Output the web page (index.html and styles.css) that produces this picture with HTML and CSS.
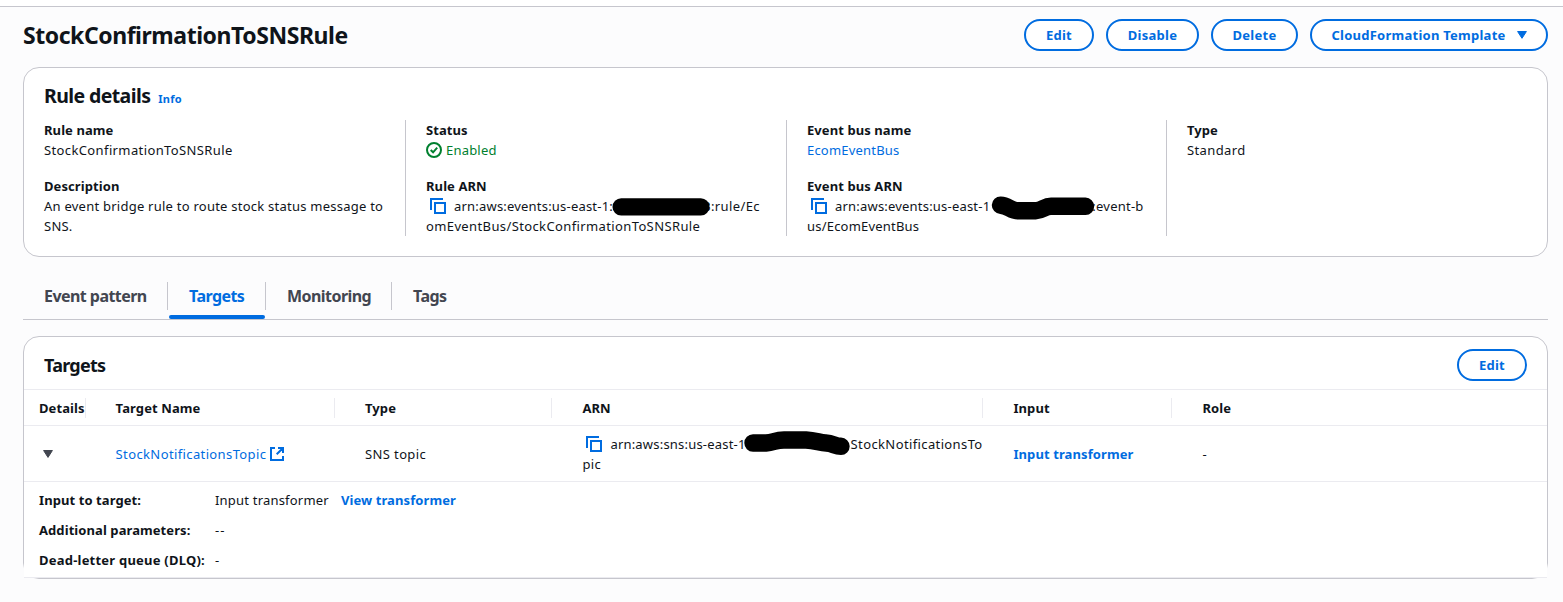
FILE: index.html
```html
<!DOCTYPE html>
<html lang="en">
<head>
<meta charset="utf-8">
<title>StockConfirmationToSNSRule</title>
<link rel="stylesheet" href="styles.css">
</head>
<body>
<div class="topbar"></div>
<main class="page">
  <header class="page-header">
    <h1 class="title">StockConfirmationToSNSRule</h1>
    <div class="actions">
      <button class="btn btn-edit">Edit</button>
      <button class="btn btn-disable">Disable</button>
      <button class="btn btn-delete">Delete</button>
      <button class="btn btn-template">CloudFormation Template
        <svg class="caret" width="10" height="8" viewBox="0 0 10 8"><path d="M0.6 0.5h8.8L5 7.3z" fill="currentColor" stroke="currentColor" stroke-linejoin="round"/></svg>
      </button>
    </div>
  </header>

  <section class="card details-card">
    <div class="details-head"><h2 class="h2">Rule details</h2><a class="info">Info</a></div>
    <div class="columns">
      <div class="column">
        <div class="field"><div class="label">Rule name</div><div class="camel">StockConfirmationToSNSRule</div></div>
        <div class="field"><div class="label">Description</div><div class="desc">An event bridge rule to route stock status message to<br>SNS.</div></div>
      </div>
      <div class="column">
        <div class="field"><div class="label">Status</div>
          <div class="status"><svg width="16" height="16" viewBox="0 0 16 16" fill="none" stroke="currentColor" stroke-width="2"><circle cx="8" cy="8" r="7"/><path d="M4.7 8l2.4 2.3 4.1-4.6"/></svg><span>Enabled</span></div></div>
        <div class="field"><div class="label">Rule ARN</div>
          <div><svg class="copy" width="16" height="16" viewBox="0 0 16 16" fill="none" stroke="currentColor" stroke-width="2"><path d="M1 12V1h12M5 5h10v10H5z"/></svg>arn:aws:events:us-east-1:<span class="mask mask-rule"><span class="under under-rule">3</span><svg width="100" height="20" viewBox="0 0 100 20"><rect x="-0.5" y="2.2" width="97" height="17.4" rx="8.7"/></svg></span><span class="camel">:rule/Ec<br>omEventBus/StockConfirmationToSNSRule</span></div></div>
      </div>
      <div class="column">
        <div class="field"><div class="label">Event bus name</div><div><a class="link">EcomEventBus</a></div></div>
        <div class="field"><div class="label">Event bus ARN</div>
          <div><svg class="copy" width="16" height="16" viewBox="0 0 16 16" fill="none" stroke="currentColor" stroke-width="2"><path d="M1 12V1h12M5 5h10v10H5z"/></svg>arn:aws:events:us-east-1<span class="mask mask-bus"><span class="under under-bus">992</span><svg width="104" height="28" viewBox="0 0 104 28"><path d="M9.5 10.2C17 10.5 20 15.8 27 15.8H44C53 15 53 11.3 60 11.3H94.5" fill="none" stroke="#000" stroke-width="17.4" stroke-linecap="round" stroke-linejoin="round"/></svg></span><span class="desc">:event-b</span><br>us/EcomEventBus</div></div>
      </div>
      <div class="column">
        <div class="field"><div class="label">Type</div><div class="camel">Standard</div></div>
      </div>
    </div>
  </section>

  <nav class="tabs">
    <a class="tab tab-pattern">Event pattern</a>
    <a class="tab tab-targets active">Targets</a>
    <a class="tab tab-monitoring">Monitoring</a>
    <a class="tab tab-tags">Tags</a>
  </nav>

  <section class="card targets-card">
    <div class="targets-head"><h2 class="h2 h2-targets">Targets</h2><button class="btn btn-edit">Edit</button></div>
    <div class="row row-head">
      <div class="cell">Details</div>
      <div class="cell">Target Name</div>
      <div class="cell">Type</div>
      <div class="cell">ARN</div>
      <div class="cell">Input</div>
      <div class="cell">Role</div>
    </div>
    <div class="row row-body">
      <div class="cell"><svg class="expander" width="10" height="8" viewBox="0 0 10 8"><path d="M0.6 0.5h8.8L5 7.4z" fill="currentColor" stroke="currentColor" stroke-linejoin="round"/></svg></div>
      <div class="cell cell-name"><a class="link camel">StockNotificationsTopic</a><svg class="external" width="14" height="14" viewBox="0 0 14 14" fill="none" stroke="currentColor" stroke-width="2"><path d="M5 1H1v12h12V9M8 1h5v5M13 1L6.7 7.3"/></svg></div>
      <div class="cell camel">SNS topic</div>
      <div class="cell cell-arn"><div><svg class="copy" width="16" height="16" viewBox="0 0 16 16" fill="none" stroke="currentColor" stroke-width="2"><path d="M1 12V1h12M5 5h10v10H5z"/></svg>arn:aws:sns:us-east-1<span class="mask mask-sns"><svg width="107" height="26" viewBox="0 0 107 26"><path d="M9 13H22C30 12.5 31 10 40 10H62C72 10.5 76 13 82 13C89 13.2 91 16.3 97 16.3" fill="none" stroke="#000" stroke-width="17.4" stroke-linecap="round" stroke-linejoin="round"/></svg></span><span class="camel">StockNotificationsTo<br>pic</span></div></div>
      <div class="cell"><a class="link strong">Input transformer</a></div>
      <div class="cell">-</div>
    </div>
    <div class="expanded">
      <div class="label">Input to target:</div><div>Input transformer<a class="link strong view">View transformer</a></div>
      <div class="label">Additional parameters:</div><div class="dashes">--</div>
      <div class="label wide">Dead-letter queue (DLQ):</div><div>-</div>
    </div>
  </section>
</main>
</body>
</html>
```
FILE: styles.css
```css
* { box-sizing: border-box; }
body {
  margin: 0;
  height: 602px;
  overflow: hidden;
  background: #fcfcfd;
  color: #0f141a;
  font: 13px/20px "Noto Sans", sans-serif;
  letter-spacing: 0.2px;
  white-space: nowrap;
}
svg { flex: none; }
h1, h2 { margin: 0; }
.topbar { height: 7px; background: #fff; border-bottom: 1px solid #c6c6cd; }
.page { padding: 12px 15px 0 23px; }
.page-header { display: flex; justify-content: space-between; height: 32px; }
.title { font-size: 23px; line-height: 33px; font-weight: 700; letter-spacing: -0.45px; }
.actions { display: flex; gap: 12px; }
.btn {
  display: flex;
  align-items: center;
  justify-content: center;
  height: 32px;
  padding: 0;
  border: 2px solid #006ce0;
  border-radius: 16px;
  background: #fff;
  color: #006ce0;
  font: 700 13px/20px "Noto Sans", sans-serif;
  letter-spacing: 0.25px;
}
.btn-edit { width: 70px; }
.btn-disable { width: 93px; }
.btn-delete { width: 87px; }
.btn-template { width: 238px; gap: 11px; }
.card { border: 1px solid #c6c6cd; border-radius: 16px; background: #fff; }
.details-card { height: 190px; margin-top: 16px; padding: 16px 20px 0; }
.details-head { display: flex; align-items: baseline; gap: 8px; height: 36px; line-height: 24px; }
.h2 { font-size: 19.5px; line-height: 24px; font-weight: 700; letter-spacing: -0.6px; }
.h2-targets { font-size: 18px; letter-spacing: -0.75px; }
.info { color: #006ce0; font-size: 11px; font-weight: 700; }
.columns { display: grid; grid-template-columns: 361px 381px 380px 1fr; height: 116px; }
.column { display: flex; flex-direction: column; gap: 16px; }
.column + .column { padding-left: 20px; border-left: 1px solid #c6c6cd; }
.label { font-weight: 700; letter-spacing: 0.08px; }
.wide { letter-spacing: 0.22px; }
.camel { letter-spacing: 0.38px; }
.desc { letter-spacing: 0.24px; }
.dashes { letter-spacing: 1px; }
.status { display: flex; align-items: center; gap: 4px; color: #00802f; }
.link { color: #006ce0; }
.strong { font-weight: 700; letter-spacing: 0.1px; }
.copy { margin: 0 8px 0 4px; color: #006ce0; vertical-align: -3px; }
.mask { display: inline-block; position: relative; height: 20px; vertical-align: top; }
.mask svg { position: absolute; left: 0; top: 0; overflow: visible; }
.mask-rule { width: 98px; }
.mask-bus { width: 102px; }
.mask-bus svg { top: -1px; left: 1px; }
.mask-sns { width: 105px; }
.mask-sns svg { top: -4px; left: -1.5px; }
.under { position: absolute; top: 0; }
.under-rule { right: 0; }
.under-bus { left: 24px; }
.tabs { display: flex; height: 48px; margin-top: 15px; border-bottom: 1px solid #c6c6cd; }
.tab {
  position: relative;
  height: 28px;
  margin-top: 10px;
  padding-left: 21px;
  border-right: 1px solid #c6c6cd;
  color: #424650;
  font-size: 16px;
  font-weight: 700;
  line-height: 29px;
  letter-spacing: -0.55px;
}
.tab-pattern { width: 145px; }
.tab-targets { width: 98px; }
.tab-monitoring { width: 126px; }
.tab-tags { border-right: 0; }
.active { color: #006ce0; }
.active::after { content: ""; position: absolute; left: 1px; right: 0; top: 33px; height: 4px; border-radius: 2px; background: #006ce0; }
.targets-card { height: 243px; margin-top: 16px; }
.targets-head { display: flex; align-items: center; justify-content: space-between; height: 53px; padding: 4px 20px 0; border-bottom: 1px solid #ebebf0; }
.row { display: grid; grid-template-columns: 62px 249px 217px 431px 189px 1fr; align-items: center; border-bottom: 1px solid #ebebf0; }
.row-head { height: 36px; font-weight: 700; letter-spacing: 0.1px; }
.row-body { height: 56px; }
.cell { padding-left: 30.4px; }
.cell:nth-child(2) { padding-left: 29.6px; }
.cell:nth-child(3) { padding-left: 30px; }
.cell:first-child { padding-left: 15px; }
.row-head .cell:not(:last-child) { border-right: 1px solid #ebebf0; }
.expander { display: block; margin-left: 4px; color: #424650; }
.external { margin-left: 4px; color: #006ce0; vertical-align: -2px; }
.expanded { display: grid; grid-template-columns: 176px 1fr; row-gap: 10px; height: 96px; padding: 8px 15px; background: #fff; border-bottom: 1px solid #ebebf0; }
.view { margin-left: 12px; }
```
